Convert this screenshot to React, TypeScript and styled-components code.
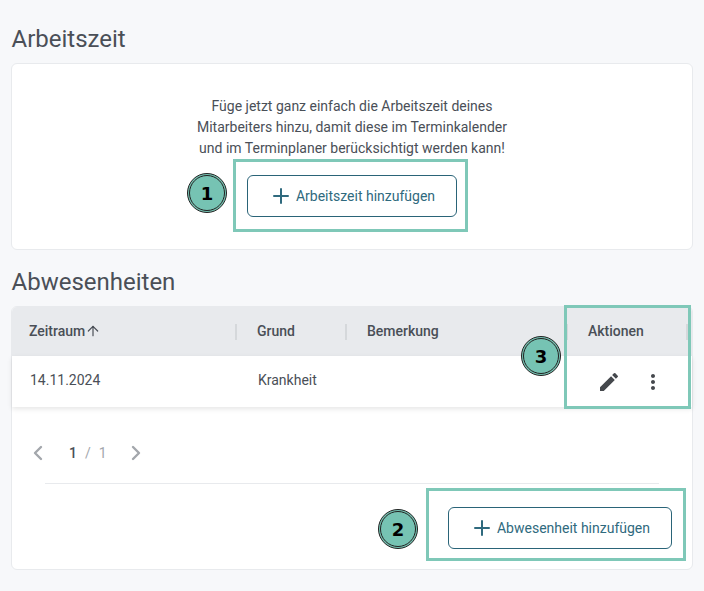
import { ChevronLeft, ChevronRight, ArrowUp, Plus } from "lucide-react";
import { MdEdit, MdMoreVert } from "react-icons/md";
import styled, { createGlobalStyle } from "styled-components";

const GlobalStyle = createGlobalStyle`
  html, body {
    margin: 0;
    padding: 0;
    background: #f7f8fa;
    font-family: Roboto, "Liberation Sans", sans-serif;
  }
`;

const Page = styled.div`
  width: 704px;
  height: 591px;
  box-sizing: border-box;
  padding: 24px 11px 0;
  overflow: hidden;
`;

const Heading = styled.h2`
  margin: 0 0 9px;
  padding-left: 0.5px;
  font-size: 24px;
  line-height: 30px;
  font-weight: 400;
  color: #4a4f57;
`;

const Card = styled.section`
  position: relative;
  box-sizing: border-box;
  background: #fff;
  border: 1px solid #e8eaed;
  border-radius: 6px;
`;

const IntroCard = styled(Card)`
  height: 187px;
  margin-bottom: 17px;
  padding-top: 32px;
  display: flex;
  flex-direction: column;
  align-items: center;
`;

const TableCard = styled(Card)`
  height: 264px;
`;

const Intro = styled.p`
  margin: 0 0 16px;
  font-size: 14px;
  line-height: 21px;
  color: #4a4f57;
  text-align: center;
`;

const AddButton = styled.button<{ $width: number }>`
  width: ${(p) => p.$width}px;
  height: 42px;
  box-sizing: border-box;
  display: flex;
  align-items: center;
  justify-content: center;
  gap: 3px;
  padding: 0;
  background: #fff;
  border: 1px solid #2a6478;
  border-radius: 6px;
  color: #2f6a7e;
  font: 400 14px Roboto, sans-serif;
`;

const Row = styled.div`
  display: grid;
  grid-template-columns: 225px 110px 221px 1fr;
  align-items: center;
`;

const HeaderRow = styled(Row)`
  height: 49px;
  background: #e8eaed;
  border-radius: 5px 5px 0 0;
`;

const BodyRow = styled(Row)`
  height: 51px;
  box-shadow: 0 2px 5px rgba(0, 0, 0, 0.1);
`;

const HeaderCell = styled.div<{ $first?: boolean; $last?: boolean }>`
  height: 16px;
  display: flex;
  align-items: center;
  box-sizing: border-box;
  margin-right: ${(p) => (p.$last ? "4px" : "0")};
  padding-left: ${(p) => (p.$first ? "17px" : "20px")};
  padding-bottom: 2px;
  border-right: 2px solid #d5d8db;
  font-size: 14px;
  font-weight: 500;
  color: #4a4f57;
`;

const ActionsHeader = styled(HeaderCell)`
  border-left: 2px solid #d5d8db;
  margin-left: -2px;
`;

const Cell = styled.div<{ $first?: boolean }>`
  padding-left: ${(p) => (p.$first ? "18px" : "21px")};
  padding-bottom: 4px;
  font-size: 14px;
  color: #4a4f57;
`;

const ActionCell = styled.div`
  display: flex;
  align-items: center;
  gap: 20px;
  padding-left: 29px;
  color: #45484d;
`;

const Pager = styled.div`
  display: flex;
  align-items: center;
  height: 24px;
  margin: 34px 0 18px 14px;
  color: #a3a7ac;
`;

const PageNumbers = styled.div`
  display: flex;
  gap: 8px;
  width: 74px;
  padding-left: 19px;
  box-sizing: border-box;
  font-size: 14px;
  color: #a3a7ac;
`;

const CurrentPage = styled.span`
  font-weight: 500;
  color: #4a4f57;
`;

const Divider = styled.hr`
  margin: 0 33px;
  border: 0;
  border-top: 1px solid #e8eaed;
`;

const Footer = styled.div`
  display: flex;
  justify-content: flex-end;
  padding: 23px 20px 0 0;
`;

const Highlight = styled.div<{ $left: number; $top: number; $w: number; $h: number }>`
  position: absolute;
  left: ${(p) => p.$left}px;
  top: ${(p) => p.$top}px;
  width: ${(p) => p.$w}px;
  height: ${(p) => p.$h}px;
  box-sizing: border-box;
  border: 3px solid #7fc8b8;
  pointer-events: none;
`;

const Badge = styled.div<{ $left: number; $top: number }>`
  position: absolute;
  left: ${(p) => p.$left}px;
  top: ${(p) => p.$top}px;
  width: 40px;
  height: 40px;
  box-sizing: border-box;
  display: flex;
  align-items: center;
  justify-content: center;
  border: 3px double #222;
  border-radius: 50%;
  background: #76c3b3;
  color: #000;
  font: 700 18px "DejaVu Sans", sans-serif;
`;

export default function App() {
  return (
    <>
      <GlobalStyle />
      <Page>
        <Heading>Arbeitszeit</Heading>
        <IntroCard>
          <Intro>
            Füge jetzt ganz einfach die Arbeitszeit deines
            <br />
            Mitarbeiters hinzu, damit diese im Terminkalender
            <br />
            und im Terminplaner berücksichtigt werden kann!
          </Intro>
          <AddButton $width={210}>
            <Plus size={24} strokeWidth={2} />
            Arbeitszeit hinzufügen
          </AddButton>
          <Highlight $left={221} $top={95} $w={235} $h={73} />
          <Badge $left={175} $top={109}>1</Badge>
        </IntroCard>

        <Heading>Abwesenheiten</Heading>
        <TableCard>
          <HeaderRow>
            <HeaderCell $first>
              Zeitraum
              <ArrowUp size={16} strokeWidth={1.8} />
            </HeaderCell>
            <HeaderCell>Grund</HeaderCell>
            <HeaderCell>Bemerkung</HeaderCell>
            <ActionsHeader $last>Aktionen</ActionsHeader>
          </HeaderRow>
          <BodyRow>
            <Cell $first>14.11.2024</Cell>
            <Cell>Krankheit</Cell>
            <Cell />
            <ActionCell>
              <MdEdit size={24} />
              <MdMoreVert size={24} />
            </ActionCell>
          </BodyRow>
          <Pager>
            <ChevronLeft size={24} strokeWidth={2.4} />
            <PageNumbers>
              <CurrentPage>1</CurrentPage>
              <span>/</span>
              <span>1</span>
            </PageNumbers>
            <ChevronRight size={24} strokeWidth={2.4} />
          </Pager>
          <Divider />
          <Footer>
            <AddButton $width={224}>
              <Plus size={24} strokeWidth={2} />
              Abwesenheit hinzufügen
            </AddButton>
          </Footer>
          <Highlight $left={552} $top={-2} $w={127} $h={104} />
          <Highlight $left={414} $top={181} $w={260} $h={73} />
          <Badge $left={509} $top={29}>3</Badge>
          <Badge $left={366} $top={202}>2</Badge>
        </TableCard>
      </Page>
    </>
  );
}
